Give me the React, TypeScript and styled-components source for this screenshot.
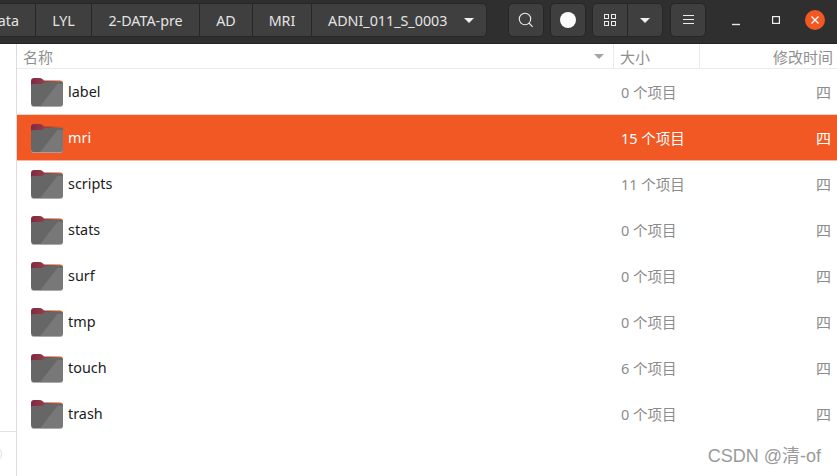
import React from 'react';
import styled, { createGlobalStyle } from 'styled-components';

const GlobalStyle = createGlobalStyle`
  html, body, #root {
    margin: 0;
    height: 100%;
  }
  body {
    overflow: hidden;
    font-family: "Noto Sans", "Noto Sans CJK SC", sans-serif;
  }
`;

const Page = styled.div`
  width: 837px;
  height: 476px;
  display: flex;
  flex-direction: column;
  background: #fff;
  overflow: hidden;
  position: relative;
`;

const HeaderBar = styled.div`
  height: 44px;
  flex: none;
  box-sizing: border-box;
  background: #2f2f2f;
  border-bottom: 1px solid #222;
  padding-top: 3px;
  display: flex;
  align-items: flex-start;
`;

const PathBar = styled.div`
  display: flex;
  height: 34px;
  width: 487px;
  flex: none;
  box-sizing: border-box;
  background: #3f3f3f;
  border: 1px solid #272727;
  border-left: none;
  border-radius: 0 5px 5px 0;
`;

const Crumb = styled.div<{ $w: number; $last?: boolean }>`
  width: ${p => p.$w}px;
  flex: none;
  box-sizing: border-box;
  display: flex;
  align-items: center;
  justify-content: ${p => (p.$last ? 'flex-start' : 'center')};
  gap: 17px;
  padding-left: ${p => (p.$last ? 16 : 0)}px;
  border-right: ${p => (p.$last ? 'none' : '1px solid #272727')};
  color: #e4e4e4;
  font-size: 14.3px;
  white-space: nowrap;
  overflow: hidden;
`;

const CutCrumb = styled(Crumb)`
  justify-content: flex-end;
  padding-right: 16px;
`;

const Caret = styled.span<{ $color?: string }>`
  display: inline-block;
  width: 0;
  height: 0;
  border-left: 5px solid transparent;
  border-right: 5px solid transparent;
  border-top: 5px solid ${p => p.$color ?? '#f0f0f0'};
`;

const ToolGroup = styled.div<{ $w: number; $ml: number }>`
  width: ${p => p.$w}px;
  margin-left: ${p => p.$ml}px;
  height: 34px;
  flex: none;
  box-sizing: border-box;
  display: flex;
  background: #3f3f3f;
  border: 1px solid #272727;
  border-radius: 5px;
`;

const ToolCell = styled.div<{ $divider?: boolean }>`
  flex: 1;
  display: flex;
  align-items: center;
  justify-content: center;
  border-right: ${p => (p.$divider ? '1px solid #272727' : 'none')};
`;

const Dot = styled.div`
  width: 16px;
  height: 16px;
  border-radius: 50%;
  background: #fbfbfb;
`;

const WindowButtons = styled.div`
  display: flex;
  align-items: center;
  height: 34px;
  margin-left: 26px;
  gap: 32px;
`;

const CloseCircle = styled.div`
  width: 20px;
  height: 20px;
  margin-left: -7px;
  border-radius: 50%;
  background: #f15824;
  display: flex;
  align-items: center;
  justify-content: center;
`;

const Body = styled.div`
  flex: 1;
  display: flex;
  min-height: 0;
`;

const Sidebar = styled.div`
  width: 17px;
  flex: none;
  box-sizing: border-box;
  background: #fff;
  border-right: 1px solid #dcdcdc;
  padding-top: 387px;
`;

const SidebarRule = styled.div`
  height: 1px;
  background: #e2e2e2;
`;

const SidebarArc = styled.div`
  position: absolute;
  left: -16px;
  top: 445px;
  width: 18px;
  height: 18px;
  box-sizing: border-box;
  border: 1px solid #e0e0e0;
  border-radius: 50%;
`;

const Content = styled.div`
  flex: 1;
  min-width: 0;
`;

const ColumnRow = styled.div`
  height: 25px;
  box-sizing: border-box;
  display: grid;
  grid-template-columns: 597px 86px 137px;
  border-bottom: 1px solid #ebebeb;
  color: #8f8f8f;
  font-size: 15px;
`;

const ColumnCell = styled.div<{ $right?: boolean; $divider?: boolean }>`
  display: flex;
  align-items: center;
  justify-content: ${p => (p.$right ? 'flex-end' : 'space-between')};
  padding: 0 ${p => (p.$right ? 4 : 9)}px 0 6px;
  border-right: ${p => (p.$divider ? '1px solid #ebebeb' : 'none')};
  white-space: nowrap;
  overflow: hidden;
`;

const FileRow = styled.div<{ $selected?: boolean }>`
  height: 46px;
  box-sizing: border-box;
  display: grid;
  grid-template-columns: 597px 86px 137px;
  align-items: center;
  background: ${p => (p.$selected ? '#f15824' : '#fff')};
  color: ${p => (p.$selected ? '#fff' : '#1c1c1c')};
  border-bottom: 1px solid ${p => (p.$selected ? '#f8b79e' : '#fff')};
  box-shadow: ${p => (p.$selected ? '0 -1px 0 #f9d5c8' : 'none')};
`;

const NameCell = styled.div`
  display: flex;
  align-items: center;
  padding-left: 14px;
  gap: 5px;
  font-size: 14.4px;
`;

const SizeCell = styled.div<{ $selected?: boolean }>`
  padding-left: 7px;
  font-size: 14.5px;
  white-space: nowrap;
  color: ${p => (p.$selected ? '#fff' : '#8c8c8c')};
`;

const DateCell = styled.div<{ $selected?: boolean }>`
  text-align: right;
  padding-right: 6px;
  font-size: 15px;
  color: ${p => (p.$selected ? '#fff' : '#8c8c8c')};
`;

const Watermark = styled.div`
  position: absolute;
  right: 16px;
  bottom: 9px;
  color: #9a9a9a;
  font-size: 18px;
  font-family: "Liberation Sans", "Noto Sans CJK SC", sans-serif;
  white-space: nowrap;
`;

const FolderIcon: React.FC<{ id: string }> = ({ id }) => (
  <svg width="32" height="30" viewBox="0 0 32 30">
    <defs>
      <linearGradient id={`tab-${id}`} x1="0" y1="0" x2="1" y2="0">
        <stop offset="0" stopColor="#80294a" />
        <stop offset="0.55" stopColor="#98443f" />
        <stop offset="1" stopColor="#c9652f" />
      </linearGradient>
    </defs>
    <path d="M0 4 Q0 1 3 1 H9 Q11 1 12 2.5 L13 3.5 H29 Q32 3.5 32 6.5 V12 H0 Z" fill={`url(#tab-${id})`} />
    <path d="M0 8.5 Q0 7 1.5 7 H11 L14 5 H30.5 Q32 5 32 6.5 V26 Q32 29.5 28.5 29.5 H3.5 Q0 29.5 0 26 Z" fill="#666" />
    <path d="M9 29.5 L26.5 6.8 H30.5 Q32 6.8 32 8.3 V26 Q32 29.5 28.5 29.5 Z" fill="#787878" />
    <path d="M0 26 Q0 29.2 3.5 29.2 H28.5 Q32 29.2 32 26 V26.8 Q32 30 28.5 30 H3.5 Q0 30 0 26.8 Z" fill="#b0b0b0" />
  </svg>
);

const SearchIcon = () => (
  <svg width="16" height="16" viewBox="0 0 16 16" fill="none" stroke="#ececec" strokeWidth="1.1">
    <circle cx="7" cy="7" r="5.7" />
    <path d="M11 11 L14.6 14.8" />
  </svg>
);

const GridIcon = () => (
  <svg width="12" height="12" viewBox="0 0 12 12" fill="none" stroke="#ececec" strokeWidth="1">
    <rect x="0.5" y="0.5" width="4" height="4" />
    <rect x="7.5" y="0.5" width="4" height="4" />
    <rect x="0.5" y="7.5" width="4" height="4" />
    <rect x="7.5" y="7.5" width="4" height="4" />
  </svg>
);

const MenuIcon = () => (
  <svg width="11" height="10" viewBox="0 0 11 10" stroke="#ececec" strokeWidth="1">
    <path d="M0 0.5 H11 M0 4.5 H11 M0 8.5 H11" />
  </svg>
);

const MinimizeIcon = () => (
  <svg width="8" height="12" viewBox="0 0 8 12" stroke="#e6e6e6" strokeWidth="1.4">
    <path d="M0 10.5 H8" />
  </svg>
);

const MaximizeIcon = () => (
  <svg width="8" height="8" viewBox="0 0 8 8" fill="none" stroke="#f0f0f0" strokeWidth="1.2">
    <rect x="0.6" y="0.6" width="6.8" height="6.8" />
  </svg>
);

const CloseIcon = () => (
  <svg width="8" height="8" viewBox="0 0 8 8" stroke="#fff" strokeWidth="1.3">
    <path d="M0.5 0.5 L7.5 7.5 M7.5 0.5 L0.5 7.5" />
  </svg>
);

const files = [
  { name: 'label', size: '0 个项目' },
  { name: 'mri', size: '15 个项目', selected: true },
  { name: 'scripts', size: '11 个项目' },
  { name: 'stats', size: '0 个项目' },
  { name: 'surf', size: '0 个项目' },
  { name: 'tmp', size: '0 个项目' },
  { name: 'touch', size: '6 个项目' },
  { name: 'trash', size: '0 个项目' },
];

const App: React.FC = () => (
  <Page>
    <GlobalStyle />
    <HeaderBar>
      <PathBar>
        <CutCrumb $w={36}>ata</CutCrumb>
        <Crumb $w={56}>LYL</Crumb>
        <Crumb $w={108}>2-DATA-pre</Crumb>
        <Crumb $w={53}>AD</Crumb>
        <Crumb $w={59}>MRI</Crumb>
        <Crumb $w={174} $last>
          ADNI_011_S_0003
          <Caret />
        </Crumb>
      </PathBar>
      <ToolGroup $w={36} $ml={21}><ToolCell><SearchIcon /></ToolCell></ToolGroup>
      <ToolGroup $w={36} $ml={6}><ToolCell><Dot /></ToolCell></ToolGroup>
      <ToolGroup $w={71} $ml={6}>
        <ToolCell $divider><GridIcon /></ToolCell>
        <ToolCell><Caret /></ToolCell>
      </ToolGroup>
      <ToolGroup $w={36} $ml={7}><ToolCell><MenuIcon /></ToolCell></ToolGroup>
      <WindowButtons>
        <MinimizeIcon />
        <MaximizeIcon />
        <CloseCircle><CloseIcon /></CloseCircle>
      </WindowButtons>
    </HeaderBar>
    <Body>
      <Sidebar>
        <SidebarRule />
      </Sidebar>
      <Content>
        <ColumnRow>
          <ColumnCell $divider>
            名称
            <Caret $color="#a5a5a5" />
          </ColumnCell>
          <ColumnCell $divider>大小</ColumnCell>
          <ColumnCell $right>修改时间</ColumnCell>
        </ColumnRow>
        {files.map(file => (
          <FileRow key={file.name} $selected={file.selected}>
            <NameCell>
              <FolderIcon id={file.name} />
              <span>{file.name}</span>
            </NameCell>
            <SizeCell $selected={file.selected}>{file.size}</SizeCell>
            <DateCell $selected={file.selected}>四</DateCell>
          </FileRow>
        ))}
      </Content>
    </Body>
    <SidebarArc />
    <Watermark>CSDN @清-of</Watermark>
  </Page>
);

export default App;
